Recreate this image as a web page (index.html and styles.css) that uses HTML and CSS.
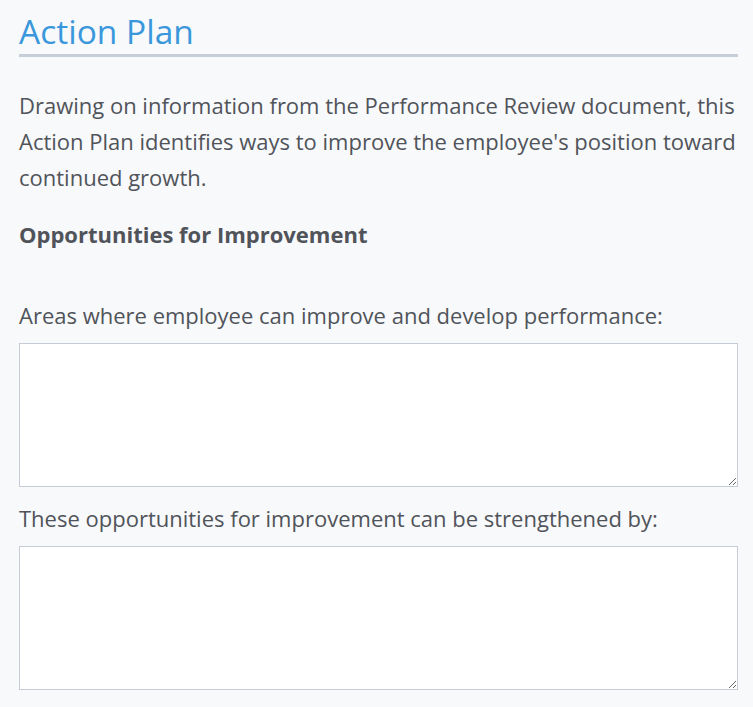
FILE: index.html
```html
<!DOCTYPE html>
<html lang="en">
<head>
    <meta charset="UTF-8">
    <meta name="viewport" content="width=device-width, initial-scale=1.0">
    <title>Action Plan</title>
    <link rel="stylesheet" href="styles.css">
</head>
<body>

    <div class="section">
        <h2 class="section-title">Action Plan</h2>

        <p class="intro">Drawing on information from the Performance Review document, this Action Plan identifies ways to improve the employee's position toward continued growth.</p>

        <h4 class="sub-title">Opportunities for Improvement</h4>

        <div class="field">
            <label for="areas">Areas where employee can improve and develop performance:</label>
            <textarea id="areas"></textarea>
        </div>

        <div class="field">
            <label for="strengthen">These opportunities for improvement can be strengthened by:</label>
            <textarea id="strengthen"></textarea>
        </div>
    </div>

</body>
</html>
```

FILE: styles.css
```css
body {
    font-family: 'Open Sans', sans-serif;
    margin: 0;
    background: #f8f9fb;
    color: #50545a;
}
.section {
    width: 719px;
    padding: 0 0 0 19px;
}
.section-title {
    margin: 0;
    padding-top: 11px;
    padding-bottom: 3px;
    font-size: 33.5px;
    font-weight: 400;
    line-height: 40px;
    color: #3a97dc;
    border-bottom: 3px solid #c6cfd8;
}
.intro {
    font-size: 22px;
    line-height: 36px;
    margin: 30px 0 0;
}
.sub-title {
    font-size: 22px;
    font-weight: 700;
    line-height: 36px;
    margin: 21px 0 0;
}
.field {
    margin-top: 45px;
}
.field + .field {
    margin-top: 13px;
}
label {
    display: block;
    font-size: 22px;
    line-height: 36px;
    margin-bottom: 10px;
}
textarea {
    display: block;
    width: 100%;
    height: 144px;
    box-sizing: border-box;
    border: 1px solid #c5ccd6;
    background: white;
    margin: 0;
}
```
